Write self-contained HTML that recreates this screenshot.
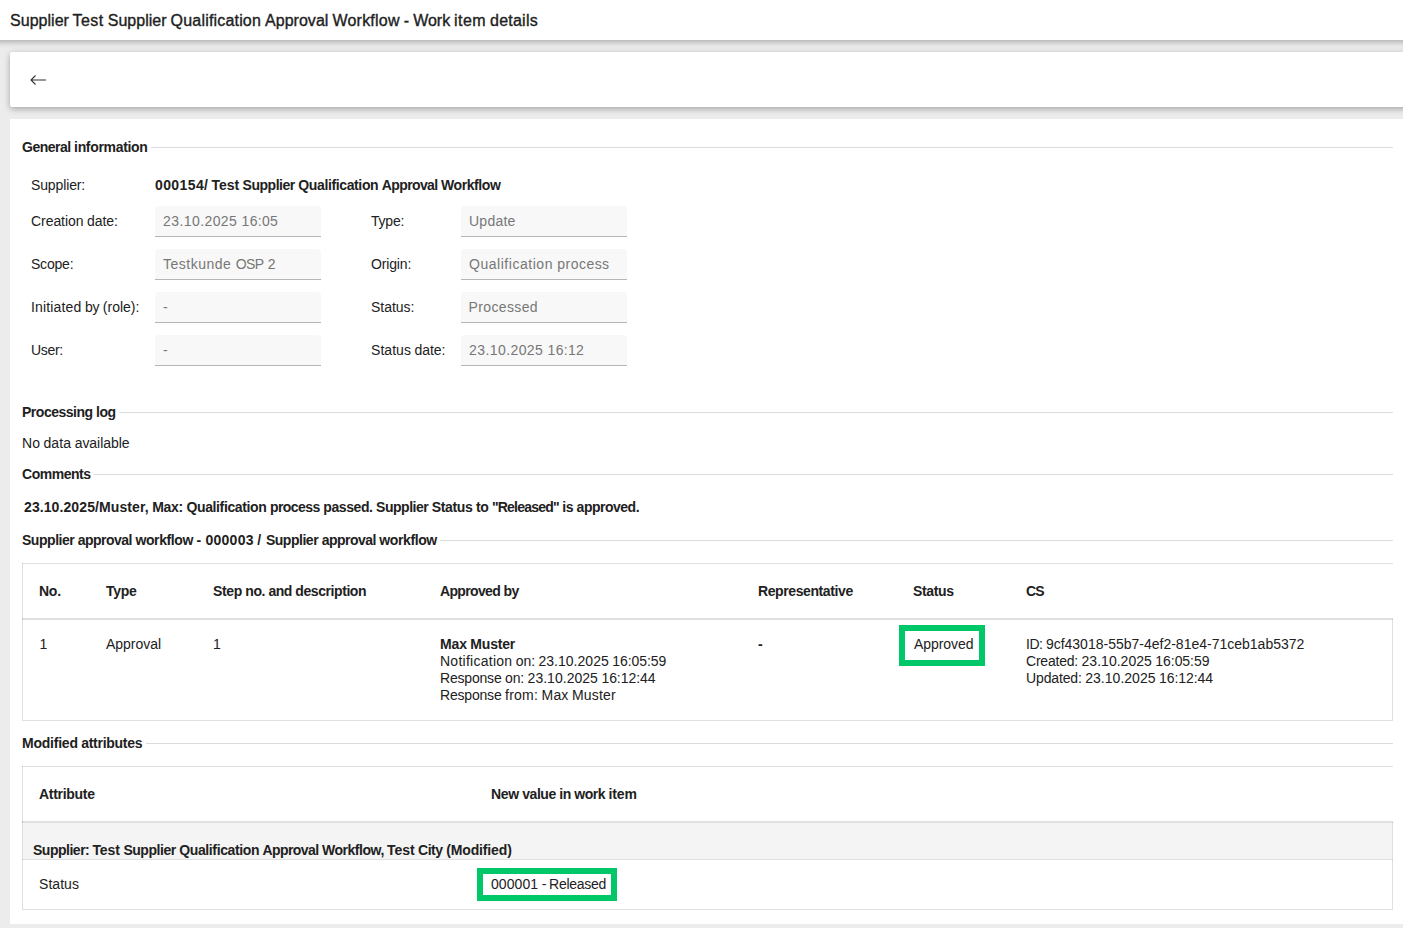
<!DOCTYPE html>
<html><head><meta charset="utf-8">
<style>
html,body{margin:0;padding:0;width:1403px;height:928px;overflow:hidden;background:#ececec;font-family:"Liberation Sans",sans-serif;color:#212121;}
.abs{position:absolute;}
.t{position:absolute;white-space:nowrap;font-size:14px;line-height:14px;}
.b{font-weight:bold;}
.ttl{font-size:16px;line-height:16px;-webkit-text-stroke:0.35px #212121;}
#hdr{position:absolute;left:-20px;top:0;width:1443px;height:40px;background:#fff;box-shadow:0 2px 6px rgba(0,0,0,.28);z-index:3;}
#card1{position:absolute;left:10px;top:52px;width:1420px;height:55px;background:#fff;border-radius:2px;box-shadow:0 2px 6px rgba(0,0,0,.3);z-index:2;}
#card2{position:absolute;left:10px;top:119px;width:1420px;height:805px;background:#fff;z-index:1;}
#ov{position:absolute;left:0;top:0;width:1403px;height:928px;z-index:10;}
.sec{position:absolute;height:1px;background:#dcdcdc;}
.inp{position:absolute;width:166px;height:30px;background:#f8f8f8;border-bottom:1px solid #b5b5b5;border-radius:4px 4px 0 0;}
.gray{color:#777;}
.hl{position:absolute;background:rgba(0,0,0,.12);}
.green{position:absolute;border:6px solid #00c767;box-sizing:border-box;}
</style></head><body>
<div id="hdr"></div>
<div id="card1"></div>
<div id="card2"></div>
<div id="ov">
<svg class="abs" style="left:0;top:0" width="60" height="100"><path d="M35.5 75.5 L31 80 L35.5 84.5 M31.5 80 H46" fill="none" stroke="#333" stroke-width="1.1"/></svg>

<div class="sec" style="left:151px;width:1242px;top:147px;"></div>
<div class="inp" style="left:155px;top:206px;"></div>
<div class="inp" style="left:461px;top:206px;"></div>
<div class="inp" style="left:155px;top:249px;"></div>
<div class="inp" style="left:461px;top:249px;"></div>
<div class="inp" style="left:155px;top:292px;"></div>
<div class="inp" style="left:461px;top:292px;"></div>
<div class="inp" style="left:155px;top:335px;"></div>
<div class="inp" style="left:461px;top:335px;"></div>

<div class="sec" style="left:119px;width:1274px;top:412px;"></div>
<div class="sec" style="left:94px;width:1299px;top:474px;"></div>
<div class="sec" style="left:440px;width:953px;top:540px;"></div>

<div class="hl" style="left:22px;top:563px;width:1371px;height:1px;"></div>
<div class="hl" style="left:22px;top:563px;width:1px;height:157px;"></div>
<div class="hl" style="left:22px;top:618px;width:1371px;height:2px;"></div>
<div class="hl" style="left:1392px;top:619px;width:1px;height:101px;"></div>
<div class="hl" style="left:22px;top:720px;width:1371px;height:1px;"></div>
<div class="green" style="left:899px;top:625px;width:86px;height:41px;"></div>

<div class="sec" style="left:146px;width:1247px;top:743px;"></div>
<div class="hl" style="left:22px;top:766px;width:1371px;height:1px;"></div>
<div class="hl" style="left:22px;top:766px;width:1px;height:143px;"></div>
<div class="abs" style="left:23px;top:823px;width:1369px;height:36px;background:#f4f4f4;"></div>
<div class="hl" style="left:22px;top:821px;width:1371px;height:2px;"></div>
<div class="hl" style="left:22px;top:859px;width:1371px;height:1px;"></div>
<div class="hl" style="left:1392px;top:822px;width:1px;height:87px;"></div>
<div class="hl" style="left:22px;top:909px;width:1371px;height:1px;"></div>
<div class="green" style="left:477px;top:868px;width:140px;height:33px;"></div>

<div class="t ttl k_title" style="left:10.00px;top:13px;letter-spacing:0.031px;">Supplier</div>
<div class="t ttl k_title" style="left:72.56px;top:13px;letter-spacing:0.449px;">Test</div>
<div class="t ttl k_title" style="left:107.69px;top:13px;letter-spacing:0.031px;">Supplier</div>
<div class="t ttl k_title" style="left:170.62px;top:13px;letter-spacing:0.183px;">Qualification</div>
<div class="t ttl k_title" style="left:265.03px;top:13px;letter-spacing:0.031px;">Approval</div>
<div class="t ttl k_title" style="left:332.42px;top:13px;letter-spacing:0.232px;">Workflow</div>
<div class="t ttl k_title" style="left:403.77px;top:13px;">-</div>
<div class="t ttl k_title" style="left:413.19px;top:13px;letter-spacing:-0.031px;">Work</div>
<div class="t ttl k_title" style="left:454.09px;top:13px;letter-spacing:0.422px;">item</div>
<div class="t ttl k_title" style="left:490.00px;top:13px;letter-spacing:0.241px;">details</div>
<div class="t b k_gen" style="left:22.00px;top:140px;letter-spacing:-0.504px;">General</div>
<div class="t b k_gen" style="left:74.09px;top:140px;letter-spacing:-0.327px;">information</div>
<div class="t  k_sup_l" style="left:31.00px;top:178px;letter-spacing:-0.127px;">Supplier:</div>
<div class="t b k_sup_v" style="left:155.00px;top:178px;letter-spacing:0.397px;">000154/</div>
<div class="t b k_sup_v" style="left:211.52px;top:178px;letter-spacing:-0.051px;">Test</div>
<div class="t b k_sup_v" style="left:242.55px;top:178px;letter-spacing:-0.463px;">Supplier</div>
<div class="t b k_sup_v" style="left:298.34px;top:178px;letter-spacing:-0.375px;">Qualification</div>
<div class="t b k_sup_v" style="left:381.75px;top:178px;letter-spacing:-0.605px;">Approval</div>
<div class="t b k_sup_v" style="left:441.08px;top:178px;letter-spacing:-0.430px;">Workflow</div>
<div class="t  k_cre_l" style="left:31.00px;top:214px;letter-spacing:-0.057px;">Creation</div>
<div class="t  k_cre_l" style="left:86.95px;top:214px;letter-spacing:-0.047px;">date:</div>
<div class="t gray k_cre_v" style="left:163.00px;top:214px;letter-spacing:0.419px;">23.10.2025</div>
<div class="t gray k_cre_v" style="left:241.62px;top:214px;letter-spacing:0.316px;">16:05</div>
<div class="t  k_typ_l" style="left:371.00px;top:214px;letter-spacing:-0.216px;">Type:</div>
<div class="t gray k_typ_v" style="left:469.00px;top:214px;letter-spacing:0.250px;">Update</div>
<div class="t  k_sco_l" style="left:31.00px;top:257px;letter-spacing:-0.214px;">Scope:</div>
<div class="t gray k_sco_v" style="left:163.00px;top:257px;letter-spacing:0.495px;">Testkunde</div>
<div class="t gray k_sco_v" style="left:235.64px;top:257px;letter-spacing:-0.552px;">OSP</div>
<div class="t gray k_sco_v" style="left:267.66px;top:257px;">2</div>
<div class="t  k_ori_l" style="left:371.00px;top:257px;letter-spacing:-0.152px;">Origin:</div>
<div class="t gray k_ori_v" style="left:469.00px;top:257px;letter-spacing:0.531px;">Qualification</div>
<div class="t gray k_ori_v" style="left:557.31px;top:257px;letter-spacing:0.464px;">process</div>
<div class="t  k_ini_l" style="left:31.00px;top:300px;letter-spacing:0.156px;">Initiated</div>
<div class="t  k_ini_l" style="left:84.94px;top:300px;letter-spacing:-0.188px;">by</div>
<div class="t  k_ini_l" style="left:102.84px;top:300px;letter-spacing:-0.011px;">(role):</div>
<div class="t gray k_ini_v" style="left:163.00px;top:300px;">-</div>
<div class="t  k_sta_l" style="left:371.00px;top:300px;letter-spacing:-0.025px;">Status:</div>
<div class="t gray k_sta_v" style="left:468.50px;top:300px;letter-spacing:0.366px;">Processed</div>
<div class="t  k_usr_l" style="left:31.00px;top:343px;letter-spacing:-0.316px;">User:</div>
<div class="t gray k_usr_v" style="left:163.00px;top:343px;">-</div>
<div class="t  k_sd_l" style="left:371.00px;top:343px;letter-spacing:0.055px;">Status</div>
<div class="t  k_sd_l" style="left:414.52px;top:343px;letter-spacing:-0.047px;">date:</div>
<div class="t gray k_sd_v" style="left:469.00px;top:343px;letter-spacing:0.419px;">23.10.2025</div>
<div class="t gray k_sd_v" style="left:547.62px;top:343px;letter-spacing:0.316px;">16:12</div>
<div class="t b k_plog" style="left:22.00px;top:405px;letter-spacing:-0.484px;">Processing</div>
<div class="t b k_plog" style="left:96.12px;top:405px;letter-spacing:-0.464px;">log</div>
<div class="t  k_nodata" style="left:22.00px;top:436px;letter-spacing:0.039px;">No</div>
<div class="t  k_nodata" style="left:43.47px;top:436px;letter-spacing:0.117px;">data</div>
<div class="t  k_nodata" style="left:74.67px;top:436px;letter-spacing:-0.038px;">available</div>
<div class="t b k_comm" style="left:22.00px;top:467px;letter-spacing:-0.463px;">Comments</div>
<div class="t b k_comment" style="left:24.00px;top:500px;letter-spacing:0.094px;">23.10.2025/Muster,</div>
<div class="t b k_comment" style="left:152.16px;top:500px;letter-spacing:-0.270px;">Max:</div>
<div class="t b k_comment" style="left:186.47px;top:500px;letter-spacing:-0.375px;">Qualification</div>
<div class="t b k_comment" style="left:269.88px;top:500px;letter-spacing:-0.538px;">process</div>
<div class="t b k_comment" style="left:323.30px;top:500px;letter-spacing:-0.411px;">passed.</div>
<div class="t b k_comment" style="left:376.05px;top:500px;letter-spacing:-0.463px;">Supplier</div>
<div class="t b k_comment" style="left:431.84px;top:500px;letter-spacing:-0.362px;">Status</div>
<div class="t b k_comment" style="left:475.95px;top:500px;letter-spacing:-0.375px;">to</div>
<div class="t b k_comment" style="left:491.91px;top:500px;letter-spacing:-0.792px;">&quot;Released&quot;</div>
<div class="t b k_comment" style="left:562.23px;top:500px;letter-spacing:-0.391px;">is</div>
<div class="t b k_comment" style="left:576.62px;top:500px;letter-spacing:-0.493px;">approved.</div>
<div class="t b k_saw" style="left:22.00px;top:533px;letter-spacing:-0.463px;">Supplier</div>
<div class="t b k_saw" style="left:77.80px;top:533px;letter-spacing:-0.525px;">approval</div>
<div class="t b k_saw" style="left:135.44px;top:533px;letter-spacing:-0.389px;">workflow</div>
<div class="t b k_saw" style="left:196.48px;top:533px;">-</div>
<div class="t b k_saw" style="left:205.50px;top:533px;letter-spacing:0.247px;">000003</div>
<div class="t b k_saw" style="left:257.19px;top:533px;">/</div>
<div class="t b k_saw" style="left:265.88px;top:533px;letter-spacing:-0.463px;">Supplier</div>
<div class="t b k_saw" style="left:321.67px;top:533px;letter-spacing:-0.525px;">approval</div>
<div class="t b k_saw" style="left:379.31px;top:533px;letter-spacing:-0.389px;">workflow</div>
<div class="t b k_th_no" style="left:39.00px;top:584px;letter-spacing:-0.240px;">No.</div>
<div class="t b k_th_type" style="left:106.00px;top:584px;letter-spacing:-0.254px;">Type</div>
<div class="t b k_th_step" style="left:213.00px;top:584px;letter-spacing:-0.387px;">Step</div>
<div class="t b k_th_step" style="left:245.28px;top:584px;letter-spacing:-0.396px;">no.</div>
<div class="t b k_th_step" style="left:268.58px;top:584px;letter-spacing:-0.552px;">and</div>
<div class="t b k_th_step" style="left:295.30px;top:584px;letter-spacing:-0.422px;">description</div>
<div class="t b k_th_appr" style="left:440.00px;top:584px;letter-spacing:-0.656px;">Approved</div>
<div class="t b k_th_appr" style="left:503.58px;top:584px;letter-spacing:-0.742px;">by</div>
<div class="t b k_th_rep" style="left:758.00px;top:584px;letter-spacing:-0.400px;">Representative</div>
<div class="t b k_th_sta" style="left:913.00px;top:584px;letter-spacing:-0.362px;">Status</div>
<div class="t b k_th_cs" style="left:1026.00px;top:584px;letter-spacing:-0.836px;">CS</div>
<div class="t  k_td_1" style="left:39.50px;top:637px;">1</div>
<div class="t  k_td_appr" style="left:106.00px;top:637px;letter-spacing:-0.027px;">Approval</div>
<div class="t  k_td_s1" style="left:213.00px;top:637px;">1</div>
<div class="t b k_max" style="left:440.00px;top:637px;letter-spacing:-0.120px;">Max</div>
<div class="t b k_max" style="left:470.36px;top:637px;letter-spacing:-0.198px;">Muster</div>
<div class="t  k_notif" style="left:440.00px;top:654px;letter-spacing:0.258px;">Notification</div>
<div class="t  k_notif" style="left:515.84px;top:654px;letter-spacing:-0.120px;">on:</div>
<div class="t  k_notif" style="left:538.44px;top:654px;letter-spacing:0.025px;">23.10.2025</div>
<div class="t  k_notif" style="left:612.25px;top:654px;letter-spacing:-0.062px;">16:05:59</div>
<div class="t  k_respon" style="left:440.00px;top:671px;letter-spacing:-0.191px;">Response</div>
<div class="t  k_respon" style="left:505.00px;top:671px;letter-spacing:-0.120px;">on:</div>
<div class="t  k_respon" style="left:527.59px;top:671px;letter-spacing:0.025px;">23.10.2025</div>
<div class="t  k_respon" style="left:601.41px;top:671px;letter-spacing:-0.062px;">16:12:44</div>
<div class="t  k_respfr" style="left:440.00px;top:688px;letter-spacing:-0.191px;">Response</div>
<div class="t  k_respfr" style="left:505.00px;top:688px;letter-spacing:0.250px;">from:</div>
<div class="t  k_respfr" style="left:541.62px;top:688px;letter-spacing:0.115px;">Max</div>
<div class="t  k_respfr" style="left:571.91px;top:688px;letter-spacing:0.188px;">Muster</div>
<div class="t b k_dash" style="left:758.00px;top:637px;">-</div>
<div class="t  k_approved" style="left:914.00px;top:637px;letter-spacing:-0.072px;">Approved</div>
<div class="t  k_id" style="left:1026.00px;top:637px;letter-spacing:-0.500px;">ID:</div>
<div class="t  k_id" style="left:1045.88px;top:637px;">9cf43018-55b7-4ef2-81e4-71ceb1ab5372</div>
<div class="t  k_created" style="left:1026.00px;top:654px;letter-spacing:-0.205px;">Created:</div>
<div class="t  k_created" style="left:1081.55px;top:654px;letter-spacing:0.025px;">23.10.2025</div>
<div class="t  k_created" style="left:1155.36px;top:654px;letter-spacing:-0.062px;">16:05:59</div>
<div class="t  k_updated" style="left:1026.00px;top:671px;letter-spacing:-0.135px;">Updated:</div>
<div class="t  k_updated" style="left:1085.23px;top:671px;letter-spacing:0.025px;">23.10.2025</div>
<div class="t  k_updated" style="left:1159.05px;top:671px;letter-spacing:-0.062px;">16:12:44</div>
<div class="t b k_modattr" style="left:22.00px;top:736px;letter-spacing:-0.227px;">Modified</div>
<div class="t b k_modattr" style="left:81.22px;top:736px;letter-spacing:-0.278px;">attributes</div>
<div class="t b k_th_attr" style="left:39.00px;top:787px;letter-spacing:-0.300px;">Attribute</div>
<div class="t b k_th_newv" style="left:491.00px;top:787px;letter-spacing:-0.354px;">New</div>
<div class="t b k_th_newv" style="left:522.22px;top:787px;letter-spacing:-0.444px;">value</div>
<div class="t b k_th_newv" style="left:559.30px;top:787px;letter-spacing:-0.445px;">in</div>
<div class="t b k_th_newv" style="left:574.34px;top:787px;letter-spacing:-0.473px;">work</div>
<div class="t b k_th_newv" style="left:608.62px;top:787px;letter-spacing:-0.164px;">item</div>
<div class="t b k_group" style="left:33.00px;top:843px;letter-spacing:-0.490px;">Supplier:</div>
<div class="t b k_group" style="left:92.39px;top:843px;letter-spacing:-0.051px;">Test</div>
<div class="t b k_group" style="left:123.42px;top:843px;letter-spacing:-0.463px;">Supplier</div>
<div class="t b k_group" style="left:179.22px;top:843px;letter-spacing:-0.375px;">Qualification</div>
<div class="t b k_group" style="left:262.62px;top:843px;letter-spacing:-0.605px;">Approval</div>
<div class="t b k_group" style="left:321.95px;top:843px;letter-spacing:-0.469px;">Workflow,</div>
<div class="t b k_group" style="left:386.98px;top:843px;letter-spacing:-0.051px;">Test</div>
<div class="t b k_group" style="left:418.02px;top:843px;letter-spacing:-0.449px;">City</div>
<div class="t b k_group" style="left:446.16px;top:843px;letter-spacing:-0.133px;">(Modified)</div>
<div class="t  k_st_row" style="left:39.00px;top:877px;letter-spacing:0.055px;">Status</div>
<div class="t  k_released" style="left:491.00px;top:877px;letter-spacing:0.083px;">000001</div>
<div class="t  k_released" style="left:541.70px;top:877px;">-</div>
<div class="t  k_released" style="left:549.06px;top:877px;letter-spacing:-0.264px;">Released</div>
</div>
</body></html>
